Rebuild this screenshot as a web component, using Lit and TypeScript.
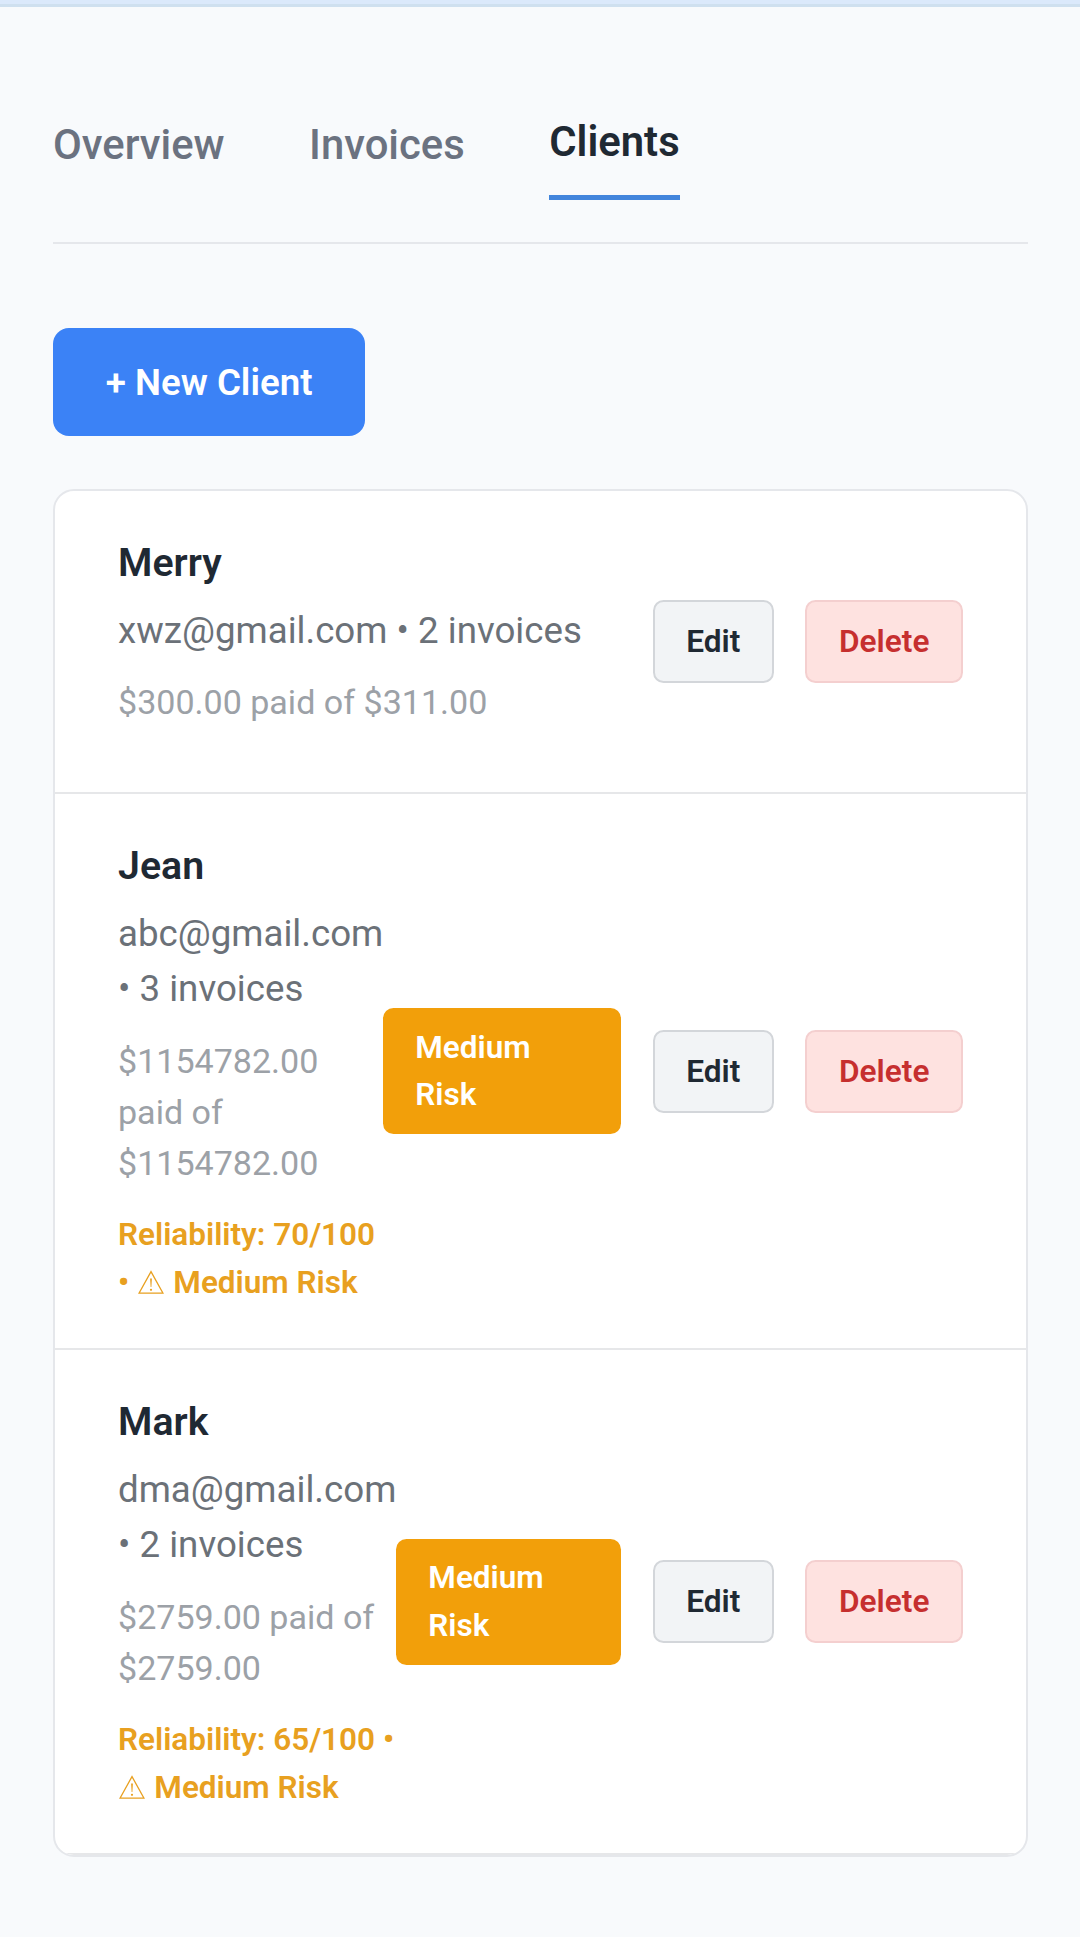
import { LitElement, html, css, svg, nothing } from "lit";
import { customElement, property } from "lit/decorators.js";

interface Client {
  name: string;
  email: string;
  invoices: number;
  paid: string;
  total: string;
  score?: number;
  risk?: string;
}

const CLIENTS: Client[] = [
  { name: "Merry", email: "xwz@gmail.com", invoices: 2, paid: "$300.00", total: "$311.00" },
  { name: "Jean", email: "abc@gmail.com", invoices: 3, paid: "$1154782.00", total: "$1154782.00", score: 70, risk: "Medium Risk" },
  { name: "Mark", email: "dma@gmail.com", invoices: 2, paid: "$2759.00", total: "$2759.00", score: 65, risk: "Medium Risk" },
];

const warningShape = svg`
  <path d="M13 1.6 L25 23.2 H1 Z" fill="none" stroke="currentColor" stroke-width="1.3" stroke-linejoin="miter"/>
  <path d="M12.1 8.6 h1.8 l-0.5 8.4 h-0.8 Z" fill="currentColor"/>
  <circle cx="13" cy="19.8" r="1.1" fill="currentColor"/>`;

@customElement("client-row")
export class ClientRow extends LitElement {
  @property({ attribute: false }) client!: Client;

  static styles = css`
    :host {
      display: flex;
      align-items: center;
      padding: 42px 63px;
      border-bottom: 2px solid #e6e7e9;
      font-size: 37px;
      line-height: 1.5;
    }
    .info { flex: 1 1 0; }
    .name { font-size: 39.3px; line-height: 59.4px; font-weight: 600; color: #1f2933; padding-top: 1px; margin-bottom: 9.7px; }
    .contact { font-size: 36.7px; line-height: 55.2px; color: #6b7178; margin-bottom: 19.2px; }
    .amount { font-size: 34.05px; line-height: 51px; color: #9ca1a7; }
    .score { font-size: 31.5px; line-height: 47.4px; font-weight: 600; color: #e8a020; margin-top: 22.6px; }
    .empty { margin-top: 21.5px; }
    .warn { display: inline-block; width: 26px; height: 24px; margin: 0 1.5px 0 1px; vertical-align: -1px; }
    .badge {
      flex: 0 1 400px;
      box-sizing: border-box;
      padding: 15.5px 32px;
      margin-right: 32px;
      border-radius: 10.5px;
      background: #f29f0a;
      color: #fff;
      font-size: 31.5px;
      line-height: 47.4px;
      font-weight: 600;
    }
    .word { display: block; width: min-content; }
    .actions { display: flex; gap: 31.5px; flex: none; }
    button {
      font: 600 31.6px/37px Roboto, sans-serif;
      padding: 21px 31.6px;
      border-radius: 10.5px;
      border: 2px solid #d3d6da;
      background: #f2f4f6;
      color: #1f2933;
      white-space: nowrap;
    }
    .delete { background: #fee2e0; border-color: #f4cfcf; color: #c62f2f; }
  `;

  render() {
    const c = this.client;
    return html`
      <div class="info">
        <div class="name">${c.name}</div>
        <div class="contact">${`${c.email} • ${c.invoices} invoices`}</div>
        <div class="amount">${`${c.paid} paid of ${c.total}`}</div>
        ${c.score
          ? html`<div class="score">${`Reliability: ${c.score}/100 • `}<svg class="warn" viewBox="0 0 26 24">${warningShape}</svg>${` ${c.risk}`}</div>`
          : html`<div class="empty"></div>`}
      </div>
      ${c.risk ? html`<div class="badge"><span class="word">${c.risk}</span></div>` : nothing}
      <div class="actions">
        <button class="edit">Edit</button>
        <button class="delete">Delete</button>
      </div>
    `;
  }
}

@customElement("app-root")
export class AppRoot extends LitElement {
  static styles = css`
    :host {
      display: block;
      box-sizing: border-box;
      min-height: 1937px;
      background: #f8fafc;
      font-family: Roboto, sans-serif;
    }
    .strip { height: 4px; background: #dbe9fb; border-bottom: 3px solid #cfe0ef; }
    .page { padding: 82px 52px 0 53px; }
    .tabs {
      display: flex;
      align-items: center;
      gap: 84.5px;
      padding-bottom: 42px;
      border-bottom: 2px solid #e5e7eb;
    }
    .tab { font-size: 41.8px; line-height: 63.5px; font-weight: 500; color: #6b7280; padding: 21.5px 0; }
    .active { font-weight: 600; color: #1f2933; border-bottom: 5px solid #4285dc; padding: 21px 0 21.5px; }
    .new {
      display: block;
      margin: 84px 0 53px;
      padding: 26.5px 52.7px;
      border: 0;
      border-radius: 16px;
      background: #3b82f6;
      color: #fff;
      font: 600 36.7px/55px Roboto, sans-serif;
    }
    .card {
      background: #fff;
      border: 2px solid #e5e7eb;
      border-radius: 21px;
      overflow: hidden;
    }
  `;

  render() {
    return html`
      <div class="strip"></div>
      <div class="page">
        <nav class="tabs">
          <span class="tab">Overview</span>
          <span class="tab">Invoices</span>
          <span class="tab active">Clients</span>
        </nav>
        <button class="new">+ New Client</button>
        <div class="card">
          ${CLIENTS.map((c) => html`<client-row .client=${c}></client-row>`)}
        </div>
      </div>
    `;
  }
}
